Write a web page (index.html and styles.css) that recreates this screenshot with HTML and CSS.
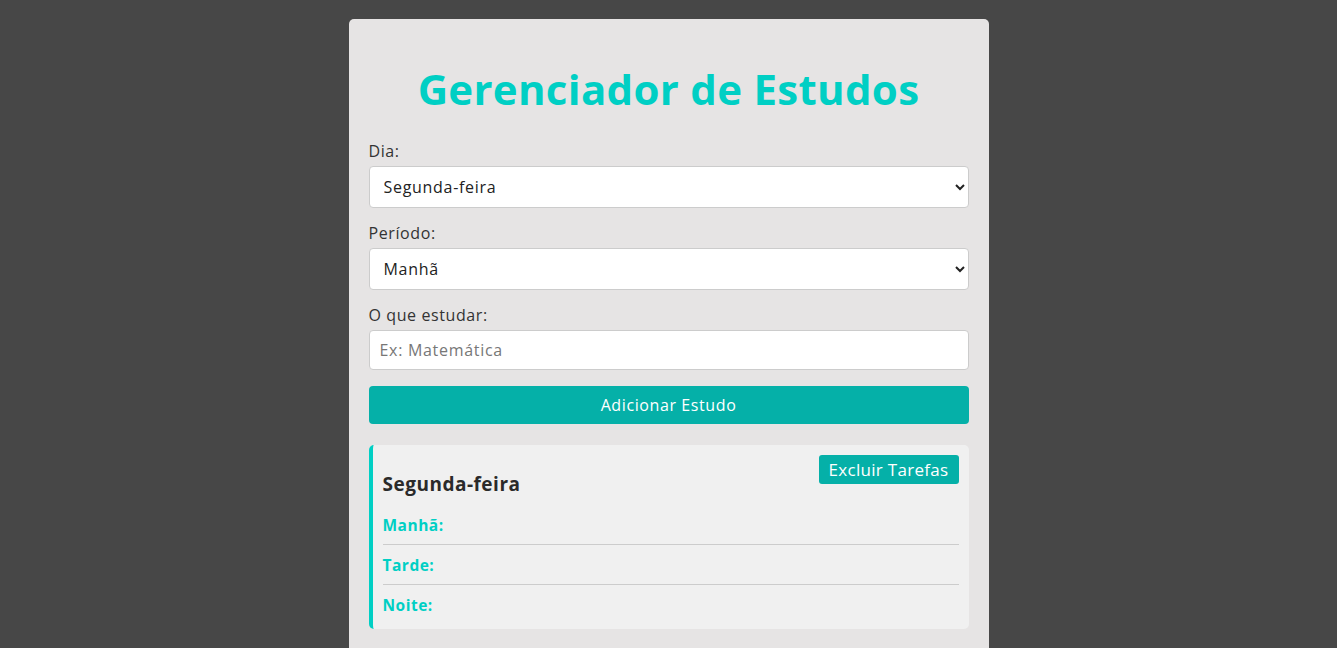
FILE: index.html
```html
<!DOCTYPE html>
<html lang="pt-BR">
<head>
<meta charset="utf-8">
<title>Gerenciador de Estudos</title>
<link rel="stylesheet" href="styles.css">
</head>
<body>
<main class="container">
  <h1 class="title">Gerenciador de Estudos</h1>
  <form class="form">
    <label class="label" for="dia">Dia:</label>
    <select id="dia" class="field select">
      <option>Segunda-feira</option>
      <option>Terça-feira</option>
      <option>Quarta-feira</option>
      <option>Quinta-feira</option>
      <option>Sexta-feira</option>
      <option>Sábado</option>
      <option>Domingo</option>
    </select>
    <label class="label" for="periodo">Período:</label>
    <select id="periodo" class="field select">
      <option>Manhã</option>
      <option>Tarde</option>
      <option>Noite</option>
    </select>
    <label class="label" for="materia">O que estudar:</label>
    <input id="materia" class="field input" type="text" placeholder="Ex: Matemática">
    <button type="button" class="btn-add">Adicionar Estudo</button>
  </form>
  <section class="day-card">
    <div class="day-head">
      <h3 class="day-title">Segunda-feira</h3>
      <button type="button" class="btn-del">Excluir Tarefas</button>
    </div>
    <div class="period">Manhã:</div>
    <div class="period">Tarde:</div>
    <div class="period last">Noite:</div>
  </section>
</main>
</body>
</html>
```
FILE: styles.css
```css
* { box-sizing: border-box; }
html, body { height: 100%; }
body {
  margin: 0;
  background: #474747;
  font-family: "Open Sans", "Noto Sans", sans-serif;
  color: #333;
  overflow: hidden;
}
.container {
  width: 640px;
  margin: 19px auto 0;
  background: #e6e4e4;
  border-radius: 5px;
  padding: 44px 20px 40px;
}
.title {
  margin: 0 0 26px;
  text-align: center;
  color: #00cfc4;
  font-size: 42px;
  line-height: 52px;
  font-weight: 700;
  letter-spacing: 0.3px;
}
.form {
  display: flex;
  flex-direction: column;
}
.label {
  font-size: 16px;
  line-height: 20px;
  margin-bottom: 5px;
  letter-spacing: 0.6px;
}
.field {
  width: 100%;
  font-family: inherit;
  font-size: 16px;
  letter-spacing: 0.7px;
  border: 1px solid #ccc;
  border-radius: 4px;
  background: #fff;
  color: #222;
  margin-bottom: 15px;
}
.select {
  height: 42px;
  padding: 0 10px;
}
.input {
  height: 40px;
  padding: 0 10px;
  margin-bottom: 16px;
}
.input::placeholder { color: #777; }
.btn-add {
  height: 38px;
  border: none;
  border-radius: 4px;
  background: #05b0a8;
  color: #fff;
  font-family: inherit;
  font-size: 16px;
  letter-spacing: 0.6px;
  margin-bottom: 21px;
}
.day-card {
  background: #f0f0f0;
  border-left: 4px solid #00cfc4;
  border-radius: 5px;
  padding: 10px 10px 5px 10px;
}
.day-head {
  display: flex;
  justify-content: space-between;
  align-items: flex-start;
  margin-bottom: 9px;
}
.day-title {
  margin: 17px 0 0;
  font-size: 19px;
  line-height: 24px;
  font-weight: 700;
  color: #2a2a2a;
  letter-spacing: 0.5px;
}
.btn-del {
  height: 29px;
  padding: 0 10px;
  border: none;
  border-radius: 3px;
  background: #05b0a8;
  color: #fff;
  font-family: inherit;
  font-size: 17px;
  letter-spacing: 0.3px;
}
.period {
  padding: 10px 0 9px;
  line-height: 20px;
  font-size: 15.5px;
  font-weight: 700;
  color: #00cfc4;
  border-bottom: 1px solid #ccc;
  letter-spacing: 0.5px;
}
.period.last { border-bottom: none; }
```
